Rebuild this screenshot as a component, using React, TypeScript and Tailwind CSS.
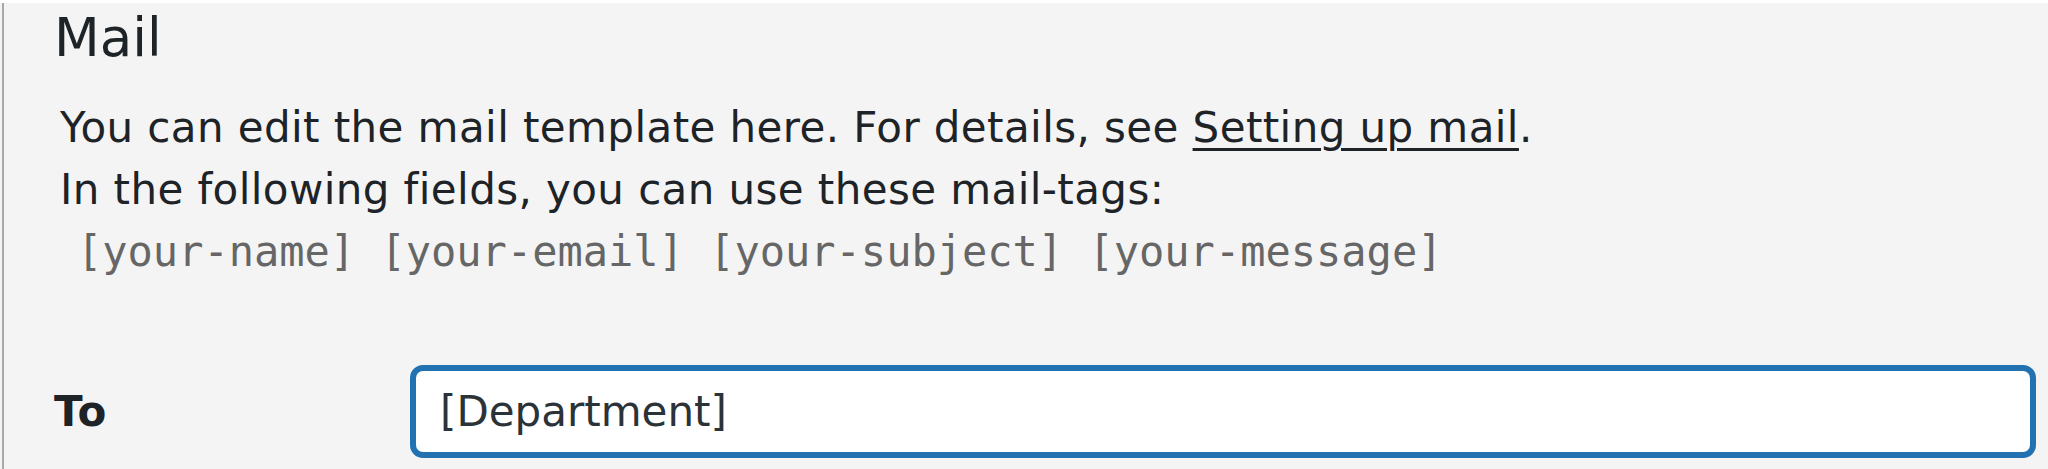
const font = { fontFamily: '"DejaVu Sans", Verdana, sans-serif' };

const mailTags = ['[your-name]', '[your-email]', '[your-subject]', '[your-message]'];

export default function App() {
    return (
        <div className="min-h-screen bg-[#f4f4f4] pl-[2px]" style={font}>
            <div className="min-h-screen border-l-2 border-[#a7aaad] pr-[12px] text-[#1d2327]">
                <h2 className="mt-[3px] pl-[50px] text-[53px] leading-[70px] font-normal">Mail</h2>

                <div className="mt-[24px] pl-[56px] text-[42px] leading-[62px]">
                    <p className="tracking-[0.4px]">
                        You can edit the mail template here. For details, see{' '}
                        <a href="#" className="underline decoration-[3px] underline-offset-[6px]">Setting up mail</a>.
                    </p>
                    <p className="tracking-[0.4px]">In the following fields, you can use these mail-tags:</p>
                    <p className="pl-[17px] text-[#666666] whitespace-pre" style={{ fontFamily: '"DejaVu Sans Mono", monospace' }}>
                        {mailTags.join(' ')}
                    </p>
                </div>

                <div className="mt-[82px] flex items-center">
                    <label className="w-[406px] shrink-0 pl-[50px] text-[42px] leading-[62px] font-bold tracking-[0.5px]">To</label>
                    <input
                        type="text"
                        defaultValue="[Department]"
                        className="h-[93px] flex-1 min-w-0 bg-white border-[6px] border-[#2271b1] rounded-[13px] px-[24px] text-[42px] text-[#2c3338] outline-none"
                        style={font}
                    />
                </div>
            </div>
        </div>
    );
}
